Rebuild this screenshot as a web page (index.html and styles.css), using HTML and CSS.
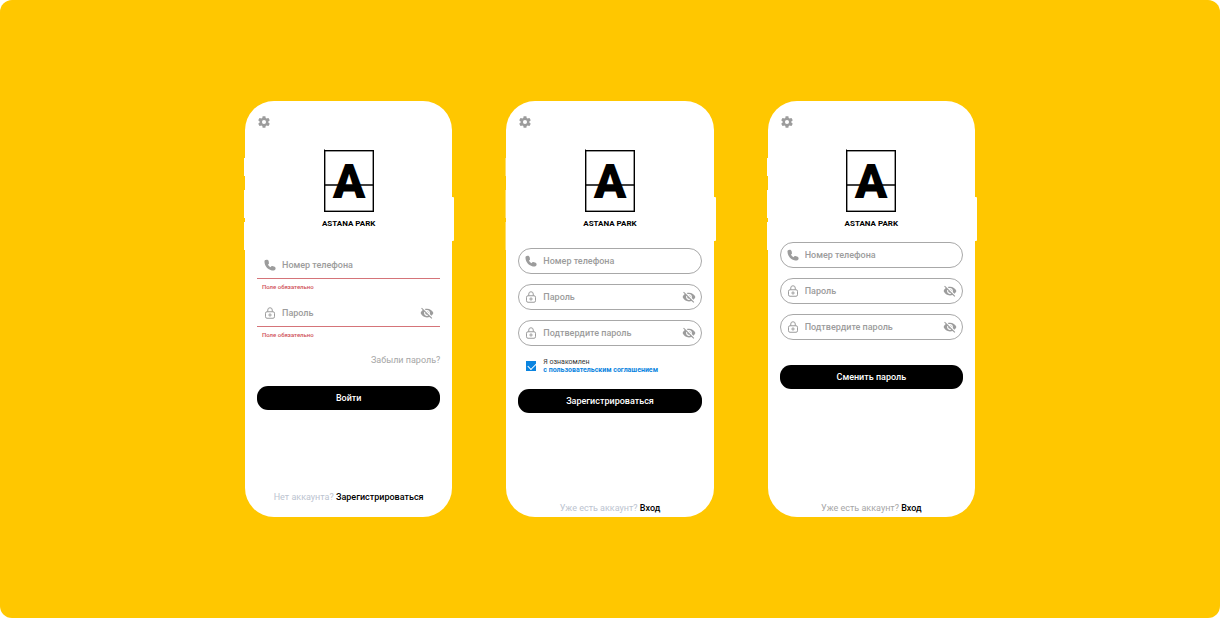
FILE: index.html
```html
<!DOCTYPE html>
<html lang="ru">
<head>
<meta charset="utf-8">
<meta name="viewport" content="width=device-width, initial-scale=1">
<title>Astana Park</title>
<link rel="stylesheet" href="styles.css">
</head>
<body>
<svg class="sprite" aria-hidden="true">
  <symbol id="gear" viewBox="0 0 24 24"><path d="M19.43 12.98c.04-.32.07-.64.07-.98s-.03-.66-.07-.98l2.11-1.65c.19-.15.24-.42.12-.64l-2-3.46c-.12-.22-.39-.3-.61-.22l-2.49 1c-.52-.4-1.08-.73-1.69-.98l-.38-2.65C14.46 2.18 14.25 2 14 2h-4c-.25 0-.46.18-.49.42l-.38 2.65c-.61.25-1.17.59-1.69.98l-2.49-1c-.23-.09-.49 0-.61.22l-2 3.46c-.13.22-.07.49.12.64l2.11 1.65c-.04.32-.07.65-.07.98s.03.66.07.98l-2.11 1.65c-.19.15-.24.42-.12.64l2 3.46c.12.22.39.3.61.22l2.49-1c.52.4 1.08.73 1.69.98l.38 2.65c.03.24.24.42.49.42h4c.25 0 .46-.18.49-.42l.38-2.65c.61-.25 1.17-.59 1.69-.98l2.49 1c.23.09.49 0 .61-.22l2-3.46c.12-.22.07-.49-.12-.64l-2.11-1.65zM12 15.500a3.500 3.500 0 1 1 0-7 3.500 3.500 0 0 1 0 7z"/></symbol>
  <symbol id="call" viewBox="0 0 24 24"><path d="M2.500 6C2.500 4 4 2.800 6.200 2.800c2 0 3.200 1 3.500 2.800l.5 2.900c.2 1.100-.1 1.700-.9 2.400l-.8.800c1.100 1.800 2.300 3 4.100 4.100l.9-1c.7-.8 1.300-1.100 2.400-.9l2.900.5c1.900.3 2.800 1.500 2.800 3.300 0 2.200-1.300 3.900-3.300 3.900C9.500 21.600 2.500 14.500 2.500 6z"/></symbol>
  <symbol id="lock" viewBox="0 0 24 24"><g fill="none" stroke="currentColor" stroke-width="2"><rect x="3" y="9.500" width="18" height="13" rx="3"/><path d="M7.500 9.500V6a4.500 4.500 0 0 1 9 0v3.500"/><circle cx="12" cy="16" r="2.200"/></g></symbol>
  <symbol id="eye-off" viewBox="0 0 24 24"><path d="M12 7c2.760 0 5 2.240 5 5 0 .65-.13 1.260-.36 1.830l2.920 2.920c1.510-1.260 2.700-2.890 3.430-4.750-1.730-4.390-6-7.500-11-7.500-1.400 0-2.740.25-3.980.7l2.160 2.160C10.740 7.130 11.350 7 12 7zM2 4.270l2.280 2.280.46.46C3.080 8.300 1.780 10.020 1 12c1.730 4.390 6 7.500 11 7.500 1.550 0 3.030-.3 4.380-.84l.42.42L19.730 22 21 20.730 3.270 3 2 4.270zM7.530 9.800l1.550 1.550c-.05.21-.08.43-.08.65 0 1.660 1.340 3 3 3 .22 0 .44-.03.65-.08l1.550 1.550c-.67.33-1.410.53-2.200.53-2.760 0-5-2.240-5-5 0-.79.2-1.530.53-2.200zm4.310-.78l3.150 3.150.02-.16c0-1.660-1.340-3-3-3l-.17.01z"/></symbol>
</svg>

<main class="stage">
  <form class="phone">
    <span class="side-keys"></span>
    <button class="icon-button" type="button" aria-label="Настройки"><svg class="icon"><use href="#gear"/></svg></button>
    <div class="brand">
      <svg class="brand-mark" viewBox="0 0 50 63"><g fill="none" stroke="#000" stroke-width="1.400"><rect x=".7" y="1.700" width="48.600" height="60.600"/><path d="M0 36h50"/></g><path d="M0 0h.5v2H0z"/><text x="25" y="49" text-anchor="middle" class="logo-letter">A</text></svg>
      <span class="brand-name">ASTANA PARK</span>
    </div>
    <div class="fields fields-lined">
      <div>
        <div class="field lined"><svg class="icon"><use href="#call"/></svg><input type="tel" aria-label="Номер телефона" placeholder="Номер телефона"></div>
        <p class="error">Поле обязательно</p>
      </div>
      <div>
        <div class="field lined"><svg class="icon lock"><use href="#lock"/></svg><input type="password" aria-label="Пароль" placeholder="Пароль"><button class="icon-button" type="button" aria-label="Показать пароль"><svg class="icon"><use href="#eye-off"/></svg></button></div>
        <p class="error">Поле обязательно</p>
      </div>
    </div>
    <a class="forgot" href="#">Забыли пароль?</a>
    <button class="submit" type="submit">Войти</button>
    <p class="switch raised">Нет аккаунта? <a href="#">Зарегистрироваться</a></p>
  </form>

  <form class="phone">
    <span class="side-keys faint"></span>
    <button class="icon-button" type="button" aria-label="Настройки"><svg class="icon"><use href="#gear"/></svg></button>
    <div class="brand">
      <svg class="brand-mark" viewBox="0 0 50 63"><g fill="none" stroke="#000" stroke-width="1.400"><rect x=".7" y="1.700" width="48.600" height="60.600"/><path d="M0 36h50"/></g><path d="M0 0h.5v2H0z"/><text x="25" y="49" text-anchor="middle" class="logo-letter">A</text></svg>
      <span class="brand-name">ASTANA PARK</span>
    </div>
    <div class="fields fields-signup">
      <div class="field pill"><svg class="icon"><use href="#call"/></svg><input type="tel" aria-label="Номер телефона" placeholder="Номер телефона"></div>
      <div class="field pill"><svg class="icon lock"><use href="#lock"/></svg><input type="password" aria-label="Пароль" placeholder="Пароль"><button class="icon-button" type="button" aria-label="Показать пароль"><svg class="icon"><use href="#eye-off"/></svg></button></div>
      <div class="field pill"><svg class="icon lock"><use href="#lock"/></svg><input type="password" aria-label="Подтвердите пароль" placeholder="Подтвердите пароль"><button class="icon-button" type="button" aria-label="Показать пароль"><svg class="icon"><use href="#eye-off"/></svg></button></div>
    </div>
    <div class="consent">
      <input type="checkbox" id="agree" checked>
      <label for="agree">Я ознакомлен<br><a href="#">с пользовательским соглашением</a></label>
    </div>
    <button class="submit" type="submit">Зарегистрироваться</button>
    <p class="switch">Уже есть аккаунт? <a href="#">Вход</a></p>
  </form>

  <form class="phone">
    <span class="side-keys"></span>
    <button class="icon-button" type="button" aria-label="Настройки"><svg class="icon"><use href="#gear"/></svg></button>
    <div class="brand">
      <svg class="brand-mark" viewBox="0 0 50 63"><g fill="none" stroke="#000" stroke-width="1.400"><rect x=".7" y="1.700" width="48.600" height="60.600"/><path d="M0 36h50"/></g><path d="M0 0h.5v2H0z"/><text x="25" y="49" text-anchor="middle" class="logo-letter">A</text></svg>
      <span class="brand-name">ASTANA PARK</span>
    </div>
    <div class="fields fields-reset">
      <div class="field pill"><svg class="icon"><use href="#call"/></svg><input type="tel" aria-label="Номер телефона" placeholder="Номер телефона"></div>
      <div class="field pill"><svg class="icon lock"><use href="#lock"/></svg><input type="password" aria-label="Пароль" placeholder="Пароль"><button class="icon-button" type="button" aria-label="Показать пароль"><svg class="icon"><use href="#eye-off"/></svg></button></div>
      <div class="field pill"><svg class="icon lock"><use href="#lock"/></svg><input type="password" aria-label="Подтвердите пароль" placeholder="Подтвердите пароль"><button class="icon-button" type="button" aria-label="Показать пароль"><svg class="icon"><use href="#eye-off"/></svg></button></div>
    </div>
    <button class="submit" type="submit">Сменить пароль</button>
    <p class="switch neutral">Уже есть аккаунт? <a href="#">Вход</a></p>
  </form>
</main>
</body>
</html>
```
FILE: styles.css
```css
* { box-sizing: border-box; }

body {
  margin: 0;
  background: #fff;
  font-family: Roboto, "Open Sans", sans-serif;
  font-size: 9px;
  line-height: 10px;
}

p { margin: 0; }
a { color: inherit; text-decoration: none; }

.sprite { position: absolute; width: 0; height: 0; }

.stage {
  display: grid;
  grid-template-columns: repeat(auto-fit, minmax(200px, 1fr));
  align-content: center;
  gap: 54px;
  min-height: 100vh;
  padding: 48px max(24px, calc(50% - 365px));
  border-radius: 12px;
  background: #ffc700;
}

.phone {
  position: relative;
  display: flex;
  flex-direction: column;
  aspect-ratio: 207 / 416;
  padding: 14px 12px 0;
  border-radius: 29px;
  background: #fff;
}

/* Hardware keys on the phone's edges */
.phone::after {
  content: "";
  position: absolute;
  top: 96px;
  right: -2px;
  width: 4px;
  height: 44px;
  border-radius: 1px;
  background: #fff;
}

.side-keys {
  position: absolute;
  top: 57px;
  left: -1px;
  width: 2px;
  height: 92px;
  background: linear-gradient(#fff 18px, transparent 18px 32px, #fff 32px 60px, transparent 60px 64px, #fff 64px);
}

.side-keys.faint { opacity: 0.4; }

.icon { display: block; width: 14px; height: 14px; flex: none; fill: currentColor; }
.icon.lock { width: 12px; height: 12px; margin: 0 1px; }

.icon-button {
  align-self: flex-start;
  padding: 0;
  border: 0;
  background: none;
  color: #9c9c9c;
}

.brand {
  display: flex;
  flex-direction: column;
  align-items: center;
  gap: 7px;
  margin-top: 20px;
}

.brand-mark { width: 50px; height: 63px; }
.logo-letter { font: 900 48px Roboto, sans-serif; }
.brand-name { font: 700 8px/10px Roboto, sans-serif; }

.fields { display: grid; gap: 10px; }
.fields-lined { margin-top: 24px; gap: 9px; }
.fields-signup { margin-top: 19px; }
.fields-reset { margin-top: 13px; margin-bottom: 25px; }

.field {
  display: flex;
  align-items: center;
  gap: 5px;
  height: 26px;
  padding: 0 6px;
  color: #9c9c9c;
}

.field .icon-button { align-self: center; }
.pill { padding: 0 5px; border: 1px solid #a8a8a8; border-radius: 13px; }
.lined { border-bottom: 1px solid #d57479; }

.field input {
  flex: 1;
  min-width: 0;
  height: 100%;
  padding: 0;
  border: 0;
  outline: 0;
  background: none;
  color: #222;
  font: 500 9px/10px Roboto, "Open Sans", sans-serif;
}

.field input::placeholder { color: #9c9c9c; opacity: 1; }

.error {
  padding: 3px 5px 0;
  color: #cf4f57;
  font-size: 6px;
  font-weight: 500;
}

.forgot { align-self: flex-end; margin-top: 15px; color: #a6a6a6; }

.submit {
  height: 24px;
  padding: 0;
  border: 0;
  border-radius: 11px;
  background: #000;
  color: #fff;
  font: 500 9px/10px Roboto, "Open Sans", sans-serif;
}

.forgot + .submit { margin-top: 21px; }

.consent {
  display: flex;
  align-items: center;
  gap: 7px;
  margin: 12px 0 15px;
  padding-left: 8px;
  color: #333;
  font-size: 7px;
  line-height: 8px;
}

.consent input {
  appearance: none;
  width: 10px;
  height: 10px;
  margin: 0;
  background: #0a84e0;
}

.consent input:checked::after {
  content: "";
  display: block;
  width: 7px;
  height: 4px;
  margin: 2px 2px;
  border: solid #fff;
  border-width: 0 0 1px 1px;
  transform: rotate(-45deg);
}

.consent a { color: #0a84e0; font-weight: 700; }

.switch {
  margin-top: auto;
  padding-bottom: 4px;
  color: #bcc4d0;
  text-align: center;
}

.switch.raised { padding-bottom: 15px; }
.switch.neutral { color: #a6a6a6; }
.switch a { color: #000; font-weight: 500; }
```
